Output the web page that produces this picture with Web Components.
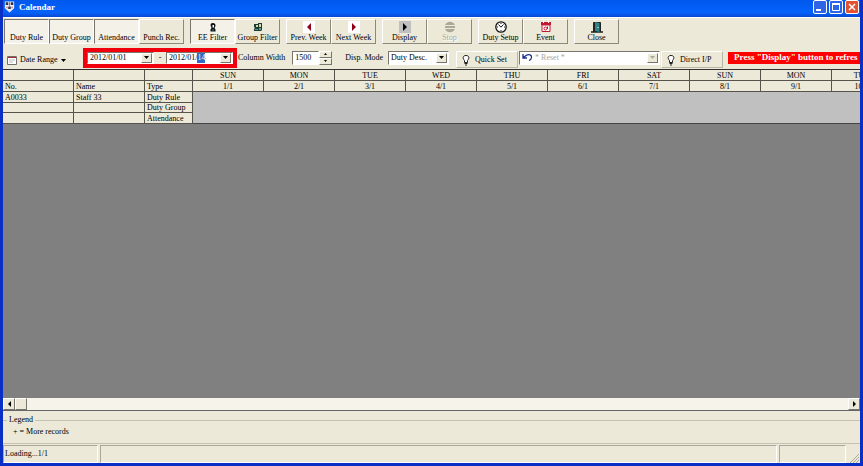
<!DOCTYPE html>
<html lang="en">
<head>
<meta charset="utf-8">
<title>Calendar</title>
<style>
html,body{margin:0;height:100%}
body{font:8px/10px "Liberation Serif",serif;color:#000;overflow:hidden}
</style>
</head>
<body>
<app-window heading="Calendar">
  <tool-bar slot="tools">
    <tool-group>
      <tool-button pressed label="Duty Rule"></tool-button>
      <tool-button pressed label="Duty Group"></tool-button>
      <tool-button pressed label="Attendance"></tool-button>
      <tool-button label="Punch Rec."></tool-button>
    </tool-group>
    <tool-group>
      <tool-button pressed label="EE Filter" icon="person"></tool-button>
      <tool-button label="Group Filter" icon="group"></tool-button>
    </tool-group>
    <tool-group>
      <tool-button label="Prev. Week" icon="prev"></tool-button>
      <tool-button label="Next Week" icon="next"></tool-button>
    </tool-group>
    <tool-group>
      <tool-button label="Display" icon="display"></tool-button>
      <tool-button label="Stop" icon="stop" disabled></tool-button>
    </tool-group>
    <tool-group>
      <tool-button label="Duty Setup" icon="clock"></tool-button>
      <tool-button label="Event" icon="event"></tool-button>
    </tool-group>
    <tool-group>
      <tool-button label="Close" icon="door"></tool-button>
    </tool-group>
  </tool-bar>
  <option-bar slot="options"></option-bar>
  <duty-grid></duty-grid>
  <h-scroll></h-scroll>
  <legend-box slot="footer">+ = More records</legend-box>
  <status-bar slot="footer">Loading...1/1</status-bar>
</app-window>
<script>
const face = '#ece9d8';
const base = `:host,*{box-sizing:border-box}button,input,select{font:inherit;color:inherit;margin:0;border-radius:0}svg{display:block;flex:none}`;
const icons = {
  person: `<svg width="12" height="12" viewBox="0 0 12 12"><path d="M6 2C3.500 2 3 4 4 5.500L4.500 7 3.500 8.500V10.500H8.500V8.500L7.500 7 8.500 5C8.700 3 7.600 2 6 2Z" fill="#111"/><path d="M5.500 4h1.500v2.500H5.500z" fill="#fff"/><path d="M5 8.500h2v1H5z" fill="#289"/></svg>`,
  group: `<svg width="12" height="12" viewBox="0 0 12 12"><path d="M2 3H6V2H10V9L9 10H2V8L3 7 2 6Z" fill="#1b3c32"/><path d="M4 4h2v2H4zM7 3h2v3H7z" fill="#d5d8a8"/><path d="M3 8h3v1H3zM7 7h2v2H7z" fill="#57a188"/></svg>`,
  prev: `<svg width="12" height="12" viewBox="0 0 12 12"><path d="M0 0h12v12H0z" fill="#fff"/><path d="M8 2V10L4 6Z" fill="#900018"/></svg>`,
  next: `<svg width="12" height="12" viewBox="0 0 12 12"><path d="M0 0h12v12H0z" fill="#fff"/><path d="M4 2V10L8 6Z" fill="#900018"/></svg>`,
  display: `<svg width="12" height="12" viewBox="0 0 12 12"><path d="M0 0h12v12H0z" fill="#c0c0c0"/><path d="M4 2V10L8 6Z" fill="#000"/></svg>`,
  stop: `<svg width="12" height="12" viewBox="0 0 12 12"><circle cx="6" cy="6" r="5.300" fill="#aca899"/><path d="M0 4h12v4H0z" fill="#ece9d8"/><path d="M1 5h10v2H1z" fill="#aca899"/></svg>`,
  clock: `<svg width="12" height="12" viewBox="0 0 12 12"><circle cx="6" cy="6" r="5.200" fill="#fff" stroke="#111" stroke-width="1.300"/><path d="M3.500 3.500L6 6.200 8.500 3.500M6 2V3M2 6h1M9 6h1M6 9v1" fill="none" stroke="#111"/></svg>`,
  event: `<svg width="12" height="12" viewBox="0 0 12 12"><path d="M1 1H11V4H1Z" fill="#c01832"/><path d="M3 0h1v2H3zM8 0h1v2H8z" fill="#fff"/><path d="M2 4H10V10.500H2Z" fill="#fff" stroke="#c01832"/><circle cx="5.500" cy="7.500" r="1.500" fill="none" stroke="#c01832"/><path d="M7.500 5.500V8" stroke="#c01832"/></svg>`,
  door: `<svg width="12" height="12" viewBox="0 0 12 12"><path d="M0 11H12" stroke="#222" stroke-width="1.500"/><path d="M2.500 11V1.500H9.500V11" fill="#222" stroke="#222"/><path d="M4 1L8.500 2V11L4 10Z" fill="#2f8585"/><path d="M6.500 6h1v1h-1z" fill="#fff"/></svg>`,
  bulb: `<svg width="8" height="12" viewBox="0 0 8 12"><path d="M4 1.500C.5 1.500 .5 4.500 2.500 6.500V8.500H5.500V6.500C7.500 4.500 7.500 1.500 4 1.500Z" fill="#fff" stroke="#222"/><path d="M2.500 9.500h3M3 11h2" stroke="#222"/></svg>`,
  sheet: `<svg width="10" height="9" viewBox="0 0 10 9"><path d="M.5 .5H9.500V8.500H.5Z" fill="#fff" stroke="#776f6f"/><path d="M1 1.500H9" stroke="#9a3030"/><path d="M2 4h6M2 6h4" stroke="#bbb"/></svg>`,
  undo: `<svg width="11" height="9" viewBox="0 0 11 9"><path d="M1 1V5H5M1.500 4.500L4 2.500C7 .5 10 2 9.500 4.500 9.300 6 8.500 7 7 7.500" fill="none" stroke="#1c2f8c" stroke-width="1.300"/></svg>`,
  logo: `<svg width="11" height="12" viewBox="0 0 13 13"><path d="M1 0H12V8L6.500 13 1 8Z" fill="#f4eef2"/><path d="M2 1h3v3H2zM8 1h3v3H8zM5 6h3v3H5z" fill="#30304c"/><path d="M6 1h1v4H6zM3 6h1v2H3zM9 6h1v2H9z" fill="#b63342"/></svg>`,
  down: `<svg width="5" height="3" viewBox="0 0 5 3"><path d="M0 0H5L2.500 3Z" fill="currentColor"/></svg>`
};
function define(name, css, render, after){
  customElements.define(name, class extends HTMLElement{
    constructor(){ super(); this.attachShadow({mode:'open'}); }
    connectedCallback(){
      this.shadowRoot.innerHTML = `<style>${base}${css}</style>${render(this)}`;
      if(after) after(this.shadowRoot);
    }
  });
}
define('app-window', `
:host{display:flex;flex-direction:column;height:100vh;background:${face};border:solid #0a2fc4;border-width:0 3px 3px;overflow:hidden}
header{flex:none;display:flex;align-items:center;gap:4px;height:17px;margin:0 -3px;padding:0 4px 4px;background:linear-gradient(#0058ee,#0462fb 75%,#0848d0);color:#fff}
h1{font-size:9px;line-height:10px;margin:0;flex:1}
nav{display:flex;gap:2px}
nav button{width:14px;height:14px;padding:0;border:1px solid #fff;border-radius:2px;background:#2f64e4;display:grid;place-items:center}
nav button:last-child{background:#e25332}
main{flex:1;min-height:0;display:flex;flex-direction:column;background:#808080;border-bottom:1px solid #666}
`, el => `<header>${icons.logo}<h1>${el.getAttribute('heading')}</h1><nav>
<button aria-label="Minimize"><svg width="10" height="10"><path d="M1 8h5" stroke="#fff" stroke-width="2"/></svg></button>
<button aria-label="Maximize"><svg width="10" height="10"><path d="M1.500 2V8.500H8.500V2" fill="none" stroke="#fff"/><path d="M1 2h8" stroke="#fff" stroke-width="2"/></svg></button>
<button aria-label="Close window"><svg width="10" height="10"><path d="M2 2l6 6M8 2l-6 6" stroke="#fff" stroke-width="1.500"/></svg></button>
</nav></header><slot name="tools"></slot><slot name="options"></slot><main><slot></slot></main><slot name="footer"></slot>`);
define('tool-bar', `:host{display:flex;flex:none;gap:6px;padding:1px 1px 3px;border-top:1px solid #fff}`, () => `<slot></slot>`);
define('tool-group', `:host{display:flex;flex:none}`, () => `<slot></slot>`);
define('tool-button', `
:host{display:block;width:45px;height:25px}
button{display:flex;flex-direction:column;align-items:center;justify-content:flex-end;width:100%;height:100%;padding:0;white-space:nowrap;background:${face};border:1px solid;border-color:#fff #8c897c #8c897c #fff}
:host([pressed]) button{background:#f3f1e8;border-color:#77756c #fff #fff #77756c}
button:disabled{color:#aca899;text-shadow:1px 1px #fff}
`, el => `<button ${el.hasAttribute('disabled')?'disabled':''} ${el.hasAttribute('pressed')?'aria-pressed="true"':''}>${icons[el.getAttribute('icon')]||''}<span>${el.getAttribute('label')}</span></button>`);
define('combo-box', `
:host{display:flex;height:14px;background:#fff;border:1px solid;border-color:#77756c #fff #fff #77756c}
input{flex:1;min-width:0;width:10px;border:0;padding:0 2px;background:none;outline:0}
input::selection{background:#316ac5;color:#fff}
input:disabled{color:#aca899}
span{display:flex;align-items:center;padding-left:2px}
button{flex:none;align-self:center;width:11px;height:10px;margin:0 1px;padding:0;display:grid;place-items:center;background:${face};border:1px solid;border-color:#fff #77756c #77756c #fff}
button:disabled{color:#aca899}
`, el => { const d = el.hasAttribute('disabled')?'disabled':''; const i = el.getAttribute('icon');
  return `${i?`<span>${icons[i]}</span>`:''}<input type="text" aria-label="${el.getAttribute('label')}" value="${el.getAttribute('value')}" ${d}><button aria-label="Open ${el.getAttribute('label')}" ${d}>${icons.down}</button>`; });
define('option-bar', `
:host{display:flex;align-items:center;height:22px;padding-bottom:1px;white-space:nowrap;overflow:hidden}
:host{flex:none}
button,label,combo-box,.dates,.spin,.pick{flex:none}
.flat{display:flex;align-items:center;align-self:flex-end;gap:3px;border:0;background:none;padding:0 4px;height:16px;width:80px}
.dates{display:flex;align-items:center;border:4px solid #f0000c;height:20px;width:154px;background:${face}}
.dates combo-box{height:12px;width:67px}.dates b{flex:1;text-align:center;font-weight:normal}
.width{margin-left:1px}
.spin{display:flex;width:40px;height:14px;margin-left:7px}
.spin input{width:27px;padding:0 2px;background:#fff;border:1px solid;border-color:#77756c #fff #fff #77756c}
.spin div{display:grid;flex:1}
.spin button{padding:0;display:grid;place-items:center;background:${face};border:1px solid;border-color:#fff #77756c #77756c #fff}
.mode{margin-left:13px}
.pick{position:relative;width:61px;height:14px;margin:0 7px 0 5px;background:#fff;border:1px solid;border-color:#77756c #fff #fff #77756c}
select{appearance:none;border:0;background:none;width:100%;height:12px;padding:0 2px;outline:0}
.pick i{position:absolute;right:1px;top:1px;width:11px;height:10px;display:grid;place-items:center;background:${face};border:1px solid;border-color:#fff #77756c #77756c #fff;pointer-events:none}
.raised{display:flex;align-items:center;align-self:flex-end;gap:5px;width:62px;height:17px;padding:1px 5px 0;background:${face};border:1px solid;border-color:#fff #b9b6a6 #b9b6a6 #fff}
.reset{width:141px;margin:0 1px}
p{flex:1 1 0;min-width:0;margin:0 0 0 5px;height:12px;background:#f00;color:#fff;font-weight:bold;font-size:9px;line-height:11px;padding-left:6px;overflow:hidden}
`, () => `<button class="flat">${icons.sheet}<span>Date Range</span><svg width="5" height="3"><path d="M0 0H5L2.500 3Z"/></svg></button>
<div class="dates"><combo-box label="Start date" value="2012/01/01"></combo-box><b>-</b><combo-box id="end" label="End date" value="2012/01/14"></combo-box></div>
<label class="width" for="cw">Column Width</label>
<div class="spin"><input id="cw" type="text" value="1500"><div><button aria-label="Increase"><svg width="3" height="2"><path d="M0 2H3L1.500 0Z"/></svg></button><button aria-label="Decrease"><svg width="3" height="2"><path d="M0 0H3L1.500 2Z"/></svg></button></div></div>
<label class="mode" for="dm">Disp. Mode</label>
<div class="pick"><select id="dm"><option>Duty Desc.</option></select><i>${icons.down}</i></div>
<button class="raised">${icons.bulb}<span>Quick Set</span></button>
<combo-box class="reset" label="Quick set value" icon="undo" value="* Reset *" disabled></combo-box>
<button class="raised">${icons.bulb}<span>Direct I/P</span></button>
<p role="status">Press "Display" button to refres</p>`,
root => { const i = root.getElementById('end').shadowRoot.querySelector('input'); i.focus(); i.setSelectionRange(8,10); });
define('duty-grid', `
:host{display:block;flex:1;min-height:0;overflow:hidden}
table{border-collapse:separate;border-spacing:0;table-layout:fixed;width:889px;border-top:1px solid #333}
col{width:71px}col.type{width:48px}col.last{width:60px}
th,td{height:11px;padding:0 2px;line-height:9px;font-weight:normal;text-align:left;white-space:nowrap;background:${face};border:solid #55534a;border-width:0 1px 1px 0}
tbody tr:nth-child(2) td{height:10px}
.day{text-align:center}
td.blank{background:#c0c0c0;border-color:#444}
`, () => { const days = ['SUN','MON','TUE','WED','THU','FRI','SAT','SUN','MON','TUE'];
  return `<table><colgroup><col><col><col class="type">${'<col>'.repeat(9)}<col class="last"></colgroup>
<thead><tr><th></th><th></th><th></th>${days.map(d=>`<th class="day">${d}</th>`).join('')}</tr>
<tr><th>No.</th><th>Name</th><th>Type</th>${days.map((d,i)=>`<th class="day">${i+1}/1</th>`).join('')}</tr></thead>
<tbody><tr><td>A0033</td><td>Staff 33</td><td>Duty Rule</td><td class="blank" colspan="10" rowspan="3"></td></tr>
<tr><td></td><td></td><td>Duty Group</td></tr><tr><td></td><td></td><td>Attendance</td></tr></tbody></table>`; });
define('h-scroll', `
:host{display:flex;flex:none;height:12px;background:#f5f3ea}
button{width:12px;padding:0;display:grid;place-items:center;background:${face};border:1px solid;border-color:#fff #77756c #77756c #fff}
div{flex:1}div::before{content:"";display:block;box-sizing:border-box;width:12px;height:12px;background:${face};border:1px solid;border-color:#fff #77756c #77756c #fff}
`, () => `<button aria-label="Scroll left"><svg width="3" height="6"><path d="M3 0V6L0 3Z"/></svg></button><div></div><button aria-label="Scroll right"><svg width="3" height="6"><path d="M0 0V6L3 3Z"/></svg></button>`);
define('legend-box', `
:host{display:block;flex:none;padding:4px 0 0}
fieldset{margin:0;height:29px;padding:0 10px;border:solid #c5c2b2;border-width:1px 0;min-width:0}
legend{margin-left:-6px;padding:0 2px;line-height:10px}
p{margin:2px 0 0}
`, () => `<fieldset><legend>Legend</legend><p><slot></slot></p></fieldset>`);
define('status-bar', `
:host{display:flex;flex:none;gap:2px;height:19px;padding-top:1px}
div{border:1px solid;border-color:#aca899 #fff #fff #aca899;line-height:16px;padding-left:1px}
.msg{width:95px}.fill{flex:1}.tail{width:67px}
svg{align-self:flex-end}
`, () => `<div class="msg"><slot></slot></div><div class="fill"></div><div class="tail"></div><svg width="12" height="10"><path d="M2 10L11 1M5 10L11 4M8 10L11 7" stroke="#aca899"/></svg>`);
</script>
</body>
</html>
